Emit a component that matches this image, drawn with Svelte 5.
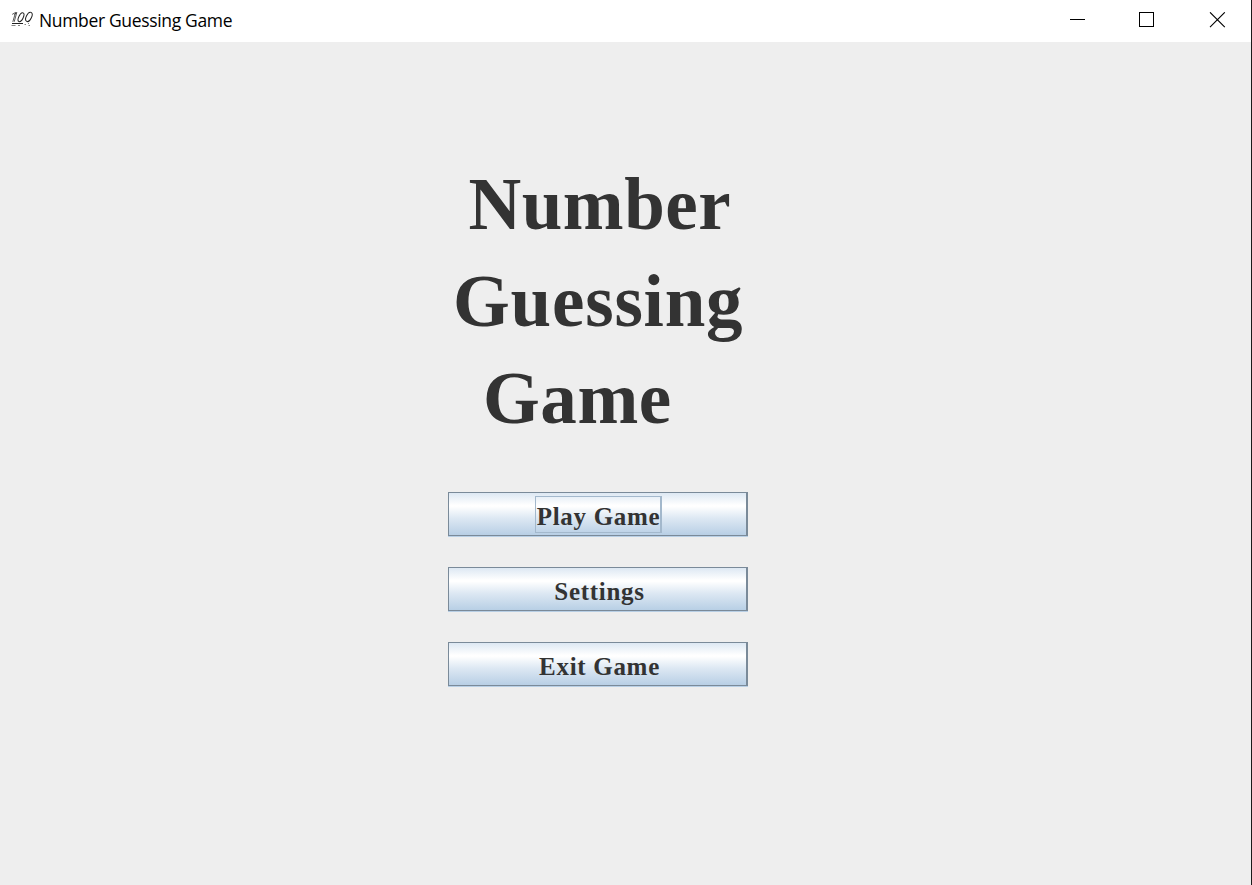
<script>
  const heading = [
    { text: 'Number', indent: 468.5, spacing: 0.5 },
    { text: 'Guessing', indent: 453, spacing: 0.8 },
    { text: 'Game', indent: 483, spacing: 0.55 }
  ];
  const actions = ['Play Game', 'Settings', 'Exit Game'];
</script>

<div class="window">
  <header>
    <svg class="logo" width="24" height="18" viewBox="0 0 24 18" fill="none" stroke="#222" stroke-width="1">
      <path d="M2.2 4.4 L5.6 2.4 L2.8 11.8 M4.4 4.6 L6.8 2.4 L4.2 11.8" stroke-width="0.75" />
      <ellipse cx="11" cy="7.2" rx="2.2" ry="4.8" transform="rotate(26 11 7.2)" />
      <ellipse cx="18.9" cy="6.9" rx="2.6" ry="5" transform="rotate(26 18.9 6.9)" />
      <path d="M2 13.5H13" />
      <path d="M14.5 14.5h1.5M18 13.5h1M1.5 15.5h4M8 15.5h2M18.5 15.5h1.5" stroke-width="0.8" stroke="#666" />
    </svg>
    <span class="caption">Number Guessing Game</span>
    <svg class="controls" width="156" height="16" viewBox="0 0 156 16" fill="none" stroke="#000">
      <path d="M0 7.5H15" />
      <rect x="69.5" y="0.5" width="14" height="14" />
      <path d="M140 0.3L154.8 15.1M154.8 0.3L140 15.1" stroke-width="1.1" />
    </svg>
  </header>
  <main>
    <h1>
      {#each heading as line}
        <span style:padding-left="{line.indent}px" style:letter-spacing="{line.spacing}px">{line.text}</span>
      {/each}
    </h1>
    <nav>
      {#each actions as label, i}
        <button class:focused={i === 0}><span>{label}</span></button>
      {/each}
    </nav>
  </main>
</div>

<style>
  :global(body) {
    margin: 0;
    overflow: hidden;
  }
  .window {
    box-sizing: border-box;
    width: 1252px;
    height: 885px;
    background: #eee;
    border-right: 1px solid #1b1b1b;
  }
  header {
    display: flex;
    height: 42px;
    background: #fff;
    box-sizing: border-box;
    padding-left: 10px;
  }
  .logo {
    margin: 10px 5px 0 0;
  }
  .caption {
    font: 17.5px/40px 'Open Sans', sans-serif;
    letter-spacing: -0.34px;
    white-space: nowrap;
    color: #000;
  }
  .controls {
    margin: 12px 25px 0 auto;
  }
  main {
    display: flex;
    flex-direction: column;
  }
  h1 {
    margin: 114px 0 0;
    font: bold 73px/97px 'Liberation Serif', serif;
    color: #333;
  }
  h1 span {
    display: block;
  }
  nav {
    display: flex;
    flex-direction: column;
    gap: 31px;
    margin: 45px 0 0 448px;
  }
  button {
    display: flex;
    justify-content: center;
    align-items: flex-start;
    box-sizing: border-box;
    width: 300px;
    height: 44px;
    padding: 3px 0 0 4px;
    border: 1px solid #7a8a99;
    border-right-width: 2px;
    box-shadow: 0 1px #b8cfe5;
    background: linear-gradient(#dde8f3 0, #fff 29%, #fff 32%, #dde8f3 60%, #b8cfe5 100%);
    font: bold 25px/39px 'Liberation Serif', serif;
    letter-spacing: 0.7px;
    color: #333;
  }
  button span {
    box-sizing: border-box;
    height: 37px;
    padding-left: 1px;
    border: 1px solid transparent;
    border-right-width: 2px;
    white-space: nowrap;
  }
  .focused {
    padding-left: 2px;
  }
  .focused span {
    border-color: #a3b8cc;
  }
</style>
